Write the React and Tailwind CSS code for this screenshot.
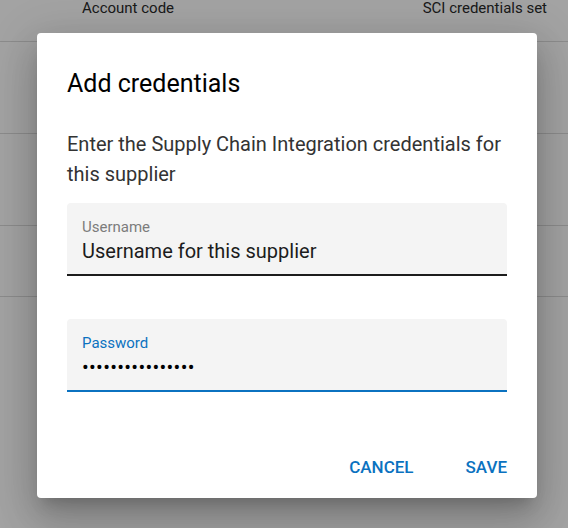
import React from 'react';

const rows = [1, 2, 3];

const Field = ({ label, value, focused, password }) => (
    <div
        className={
            "h-[73px] rounded-t-[4px] bg-[#f4f4f4] px-[15px] pt-[14px] border-b-2 " +
            (focused ? "border-[#0b72c0]" : "border-[#1c1c1c]")
        }
    >
        <div className={"text-[15px] leading-[20px] " + (focused ? "text-[#0b72c0]" : "text-[#7c7c7c]")}>
            {label}
        </div>
        {password ? (
            <div className="mt-[1px] text-[20px] leading-[26px] tracking-[0.3px] text-black">{value}</div>
        ) : (
            <div className="mt-[1px] text-[20px] leading-[26px] text-[#1c1c1c]">{value}</div>
        )}
    </div>
);

export default function App() {
    return (
        <div className="relative w-[568px] h-[528px] overflow-hidden bg-white font-['Roboto',sans-serif]">
            {/* Table behind the dialog */}
            <div className="flex h-[42px] items-start justify-between border-b border-[#dcdcdc] pl-[82px] pr-[21px] text-[15px] leading-[16px] text-[#2a2a2a]">
                <span>Account code</span>
                <span>SCI credentials set</span>
            </div>
            {rows.map((r) => (
                <div key={r} className={r === 3 ? "h-[71px] border-b border-[#dcdcdc]" : "h-[92px] border-b border-[#dcdcdc]"} />
            ))}

            {/* Backdrop */}
            <div className="absolute inset-0 bg-black/[0.36] pl-[37px] pt-[33px]">
                <div className="w-[500px] h-[465px] rounded-[4px] bg-white px-[30px] pt-[36px] shadow-[0_11px_15px_-7px_rgba(0,0,0,0.2),0_24px_38px_3px_rgba(0,0,0,0.14),0_9px_46px_8px_rgba(0,0,0,0.12)] flex flex-col">
                    <h2 className="text-[25px] leading-[30px] text-black">Add credentials</h2>
                    <p className="mt-[30px] text-[20px] leading-[30px] text-[#333]">
                        Enter the Supply Chain Integration credentials for this supplier
                    </p>
                    <div className="mt-[14px] flex flex-col gap-[43px]">
                        <Field label="Username" value="Username for this supplier" />
                        <Field label="Password" value="••••••••••••••••" focused password />
                    </div>
                    <div className="mt-[65px] flex justify-end gap-[52px] text-[17px] font-medium leading-[20px] text-[#0b72c0]">
                        <button>CANCEL</button>
                        <button>SAVE</button>
                    </div>
                </div>
            </div>
        </div>
    );
}
